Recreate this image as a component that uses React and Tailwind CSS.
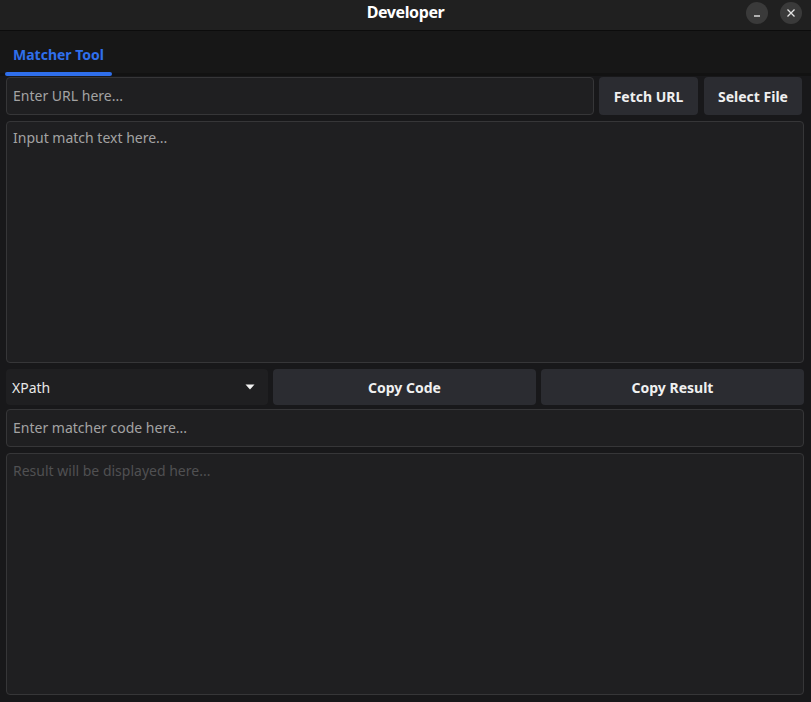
export default function App() {
    return (
        <div className="w-[811px] h-[702px] bg-[#18181a] text-white flex flex-col overflow-hidden" style={{ fontFamily: '"Noto Sans", "Open Sans", sans-serif' }}>
            {/* Title bar */}
            <div className="h-[31px] bg-[#202020] border-b border-[#0c0c0c] flex items-center relative shrink-0">
                <div className="flex-1 text-center text-[16px] font-bold tracking-tight pb-[6px]">Developer</div>
                <div className="absolute right-[9px] top-[2px] flex gap-[12px]">
                    <button className="w-[22px] h-[22px] rounded-full bg-[#3a3a3a] flex items-center justify-center">
                        <svg width="10" height="10" viewBox="0 0 10 10"><path d="M2 8h6" stroke="#e5e5e5" strokeWidth="1.4" /></svg>
                    </button>
                    <button className="w-[22px] h-[22px] rounded-full bg-[#3a3a3a] flex items-center justify-center">
                        <svg width="10" height="10" viewBox="0 0 10 10"><path d="M1.5 1.5l7 7M8.5 1.5l-7 7" stroke="#e5e5e5" strokeWidth="1.3" /></svg>
                    </button>
                </div>
            </div>

            {/* Tabs */}
            <div className="h-[45px] bg-[#171717] flex items-end shrink-0 border-b-[3px] border-[#121212] relative">
                <div className="ml-[5px] w-[106px] h-full flex flex-col">
                    <div className="flex-1 flex items-center pl-[8px] pt-[4px] text-[14px] font-bold text-[#2f6fec]">Matcher Tool</div>
                </div>
                <div className="absolute left-[5px] bottom-[-3px] w-[107px] h-[4px] rounded-full bg-[#2f6fec]"></div>
            </div>

            {/* Content */}
            <div className="flex-1 flex flex-col gap-[6px] pl-[6px] pr-[7px] pt-[1px] pb-[7px] min-h-0">
                <div className="flex gap-[5px] h-[38px] shrink-0 pr-[2px]">
                    <div className="flex-1 bg-[#1f1f21] border border-[#363638] rounded-[4px] flex items-center px-[6px] pb-[2px] text-[14px] text-[#a3a3a3]">Enter URL here...</div>
                    <button className="w-[99px] bg-[#2b2c31] rounded-[4px] text-[14px] font-bold text-[#f0f0f0]">Fetch URL</button>
                    <button className="w-[98px] bg-[#2b2c31] rounded-[4px] text-[14px] font-bold text-[#f0f0f0] ml-[1px]">Select File</button>
                </div>

                <div className="h-[242px] shrink-0 bg-[#1f1f21] border border-[#363638] rounded-[4px] px-[6px] pt-[5px] text-[14px] text-[#a3a3a3]">Input match text here...</div>

                <div className="flex gap-[5px] h-[36px] shrink-0">
                    <div className="w-[262px] bg-[#1f1f21] rounded-[4px] flex items-center justify-between pl-[6px] pr-[13px] text-[14px] text-[#e8e8e8]">
                        <span>XPath</span>
                        <svg width="10" height="6" viewBox="0 0 10 6"><path d="M0.5 0.5h9L5 5.5z" fill="#f2f2f2" /></svg>
                    </div>
                    <button className="flex-1 bg-[#2b2c31] rounded-[4px] text-[14px] font-bold text-[#f0f0f0]">Copy Code</button>
                    <button className="flex-1 bg-[#2b2c31] rounded-[4px] text-[14px] font-bold text-[#f0f0f0]">Copy Result</button>
                </div>

                <div className="h-[38px] shrink-0 -mt-[2px] bg-[#1f1f21] border border-[#363638] rounded-[4px] flex items-center px-[6px] pb-[2px] text-[14px] text-[#a3a3a3]">Enter matcher code here...</div>

                <div className="flex-1 bg-[#1f1f21] border border-[#363638] rounded-[4px] px-[6px] pt-[6px] text-[14px] text-[#505052]">Result will be displayed here...</div>
            </div>
        </div>
    );
}
